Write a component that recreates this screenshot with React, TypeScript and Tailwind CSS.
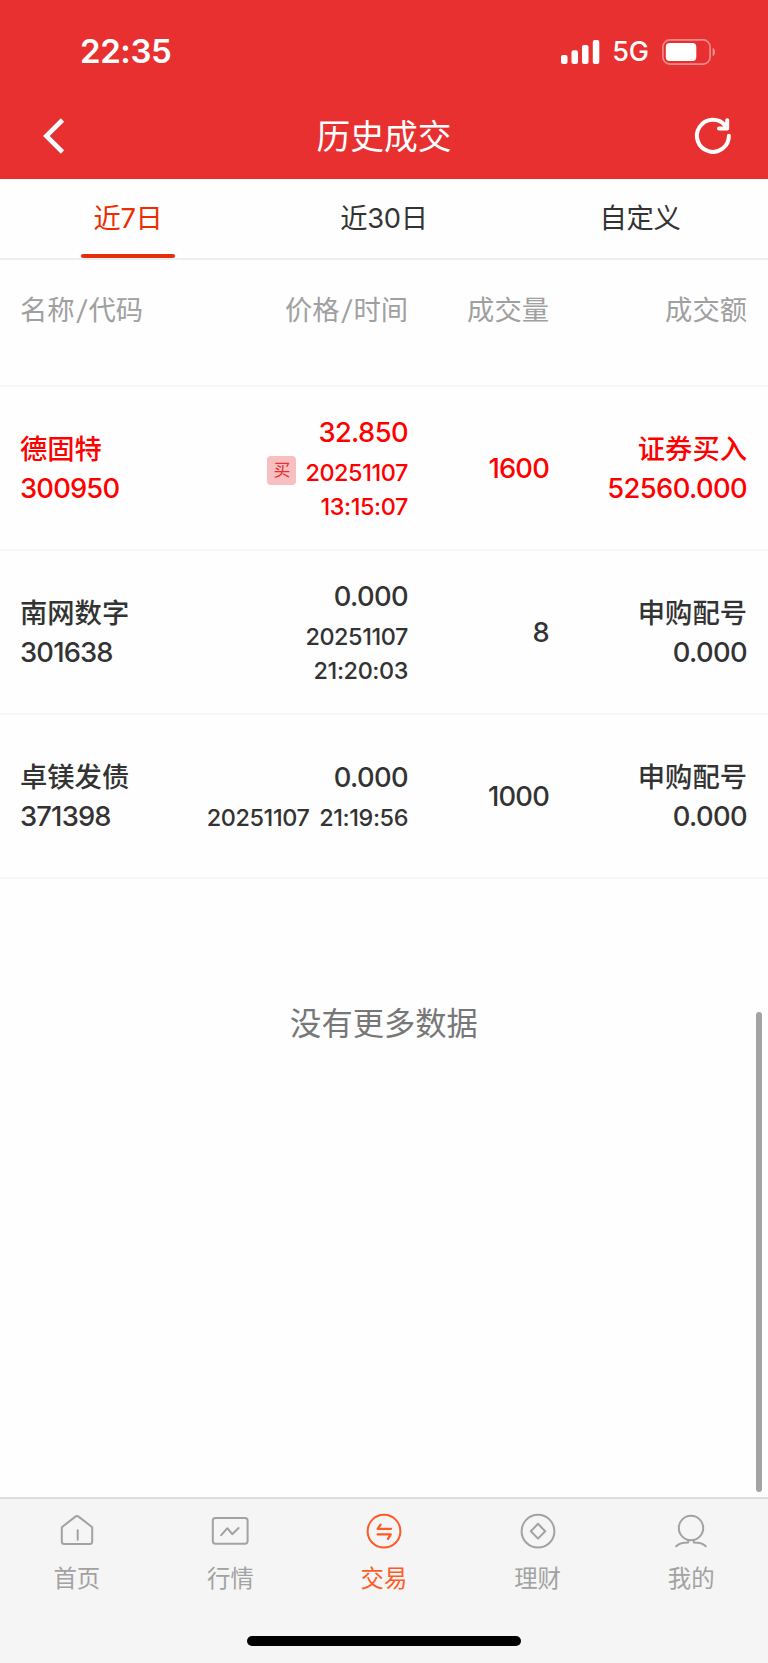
import type { ReactNode } from 'react';
import clsx from 'clsx';

interface Deal {
  name: string;
  code: string;
  price: string;
  time: string[];
  volume: string;
  type: string;
  amount: string;
  buy?: boolean;
}

interface NavItem {
  label: string;
  icon: ReactNode;
  active?: boolean;
}

const tabs = ['近7日', '近30日', '自定义'];

const deals: Deal[] = [
  {
    name: '德固特',
    code: '300950',
    price: '32.850',
    time: ['20251107', '13:15:07'],
    volume: '1600',
    type: '证券买入',
    amount: '52560.000',
    buy: true,
  },
  {
    name: '南网数字',
    code: '301638',
    price: '0.000',
    time: ['20251107', '21:20:03'],
    volume: '8',
    type: '申购配号',
    amount: '0.000',
  },
  {
    name: '卓镁发债',
    code: '371398',
    price: '0.000',
    time: ['20251107 21:19:56'],
    volume: '1000',
    type: '申购配号',
    amount: '0.000',
  },
];

const navItems: NavItem[] = [
  {
    label: '首页',
    icon: (
      <>
        <path d="M4.8 16.2 18.4 5.6q1.6-1.1 3.2 0L35.2 16.2V30.5q0 2.5-2.5 2.5H7.3q-2.5 0-2.5-2.5Z" />
        <path d="M20.7 19.2v9.6" />
      </>
    ),
  },
  {
    label: '行情',
    icon: (
      <>
        <rect x="2.8" y="6.9" width="34.8" height="25.8" rx="2.6" />
        <path d="m11.2 24.2 6.2-7 4.8 6 6.4-6.2" />
      </>
    ),
  },
  {
    label: '交易',
    active: true,
    icon: (
      <>
        <circle cx="20" cy="20.2" r="16.4" />
        <path d="M27 17.8H13.6l3-4.2M13.6 23.4h13.2l-2.8 4.4" strokeWidth="2.2" />
      </>
    ),
  },
  {
    label: '理财',
    icon: (
      <>
        <circle cx="20" cy="20.2" r="16.4" />
        <path d="m20 12.8 7.2 7.4-7.2 7.4-7.2-7.4Z" />
      </>
    ),
  },
  {
    label: '我的',
    icon: (
      <>
        <circle cx="20" cy="17" r="12.2" />
        <path d="M17.2 29v2.6C12 31.6 7.8 32.6 5.2 35.3M22.8 29v2.6c5.2 0 9.4 1 12 3.7" />
      </>
    ),
  },
];

function StatusBar() {
  return (
    <div className="flex h-[103px] items-center justify-between pr-[51px] pl-20 text-white">
      <span className="text-[33px] font-semibold tracking-[-0.4px]">22:35</span>
      <div className="flex items-center">
        <svg className="h-6 w-[39px]" viewBox="0 0 39 24" fill="currentColor">
          <rect x="0" y="15" width="6.5" height="9" rx="2" />
          <rect x="10.5" y="10.3" width="6.5" height="13.7" rx="2" />
          <rect x="21" y="5" width="6.5" height="19" rx="2" />
          <rect x="31.8" y="0" width="6.5" height="24" rx="2" />
        </svg>
        <span className="mt-px ml-3 text-[27px] leading-8 font-medium">5G</span>
        <svg className="ml-[13px] h-[26px] w-[55px]" viewBox="0 0 55 26">
          <rect x="0.9" y="0.9" width="47.2" height="24.2" rx="7" fill="none" stroke="white" strokeOpacity="0.45" strokeWidth="1.6" />
          <rect x="3.8" y="4" width="30.5" height="18" rx="4" fill="white" />
          <path d="M50.7 9v8c3-1 3-7 0-8Z" fill="white" fillOpacity="0.5" />
        </svg>
      </div>
    </div>
  );
}

function TitleBar() {
  return (
    <div className="grid h-[76px] grid-cols-3 items-start px-[42px] pt-3 text-white">
      <svg className="mt-px h-10 w-6" viewBox="0 0 24 40" fill="none" stroke="currentColor" strokeWidth="4.6">
        <path d="M20.5 4 4.3 20l16.2 16" />
      </svg>
      <h1 className="text-center text-[33.8px] leading-[44px] font-normal">历史成交</h1>
      <svg className="-mt-px -mr-[9px] h-11 w-11 justify-self-end" viewBox="0 0 44 44" fill="none" stroke="currentColor" strokeWidth="4" strokeLinecap="round" strokeLinejoin="round">
        <path d="M37.9 21.8A16 16 0 1 1 34.2 11.6" />
        <path d="M36.2 6.3v8.1H28" />
      </svg>
    </div>
  );
}

function DealRow({ deal }: { deal: Deal }) {
  return (
    <div
      className={clsx(
        'flex h-[164px] items-center border-b-2 border-[#f7f7f7] pr-[21px] pl-5 text-[27.3px] leading-[39px] font-medium tracking-[-0.6px]',
        deal.buy ? 'text-[#ff0000]' : 'text-[#333333]'
      )}
    >
      <div className="w-[140px] pt-0.5">
        <div className="tracking-normal">{deal.name}</div>
        <div className="tracking-[-0.8px]">{deal.code}</div>
      </div>
      <div className="flex w-[248px] flex-col items-end pb-1 text-right">
        <div className="leading-[47px]">{deal.price}</div>
        <div className="flex items-center gap-[9px]">
          {deal.buy && (
            <span className="mb-[38px] flex h-[29px] w-[29px] items-center justify-center rounded bg-[#f8bfc0] text-[17px] leading-none font-normal tracking-normal text-[#e93030]">
              买
            </span>
          )}
          <div className="text-[23.4px] leading-[34px] tracking-[-0.4px] [word-spacing:4px] whitespace-pre">
            {deal.time.map((line) => (
              <div key={line}>{line}</div>
            ))}
          </div>
        </div>
      </div>
      <div className="w-[141px] text-right tracking-[-0.8px]">{deal.volume}</div>
      <div className="flex-1 pt-0.5 text-right">
        <div className="tracking-normal">{deal.type}</div>
        <div>{deal.amount}</div>
      </div>
    </div>
  );
}

function BottomNav() {
  return (
    <nav className="h-[166px] border-t-2 border-[#dcdcdc] bg-[#f5f5f5]">
      <div className="grid h-[137px] grid-cols-5">
        {navItems.map(({ label, icon, active }) => (
          <div
            key={label}
            className={clsx('flex flex-col items-center pt-3', active ? 'text-[#ff5a26]' : 'text-[#a2a2a2]')}
          >
            <svg className="h-10 w-10" viewBox="0 0 40 40" fill="none" stroke="currentColor" strokeWidth="2" strokeLinecap="round" strokeLinejoin="round">
              {icon}
            </svg>
            <span className="mt-3 text-[23.4px] leading-8 font-normal">{label}</span>
          </div>
        ))}
      </div>
      <div className="mx-auto h-2.5 w-[274px] rounded-full bg-black" />
    </nav>
  );
}

function Slash() {
  return <span className="inline-block -skew-x-6 px-0.5">/</span>;
}

export default function App() {
  return (
    <div className="flex h-[1663px] w-[768px] flex-col bg-[#fefefe] font-['Inter','Noto_Sans_CJK_SC',sans-serif]">
      <header className="h-[179px] bg-[#e93030]">
        <StatusBar />
        <TitleBar />
      </header>

      <div className="grid h-[81px] grid-cols-3 border-b-2 border-[#eeeeee] text-[27.3px] text-[#333333]">
        {tabs.map((tab, i) => (
          <div key={tab} className={clsx('flex flex-col items-center justify-between pt-5', i === 0 && 'text-[#ee2c00]')}>
            <span className="leading-10 tracking-[-0.3px]">{tab}</span>
            {i === 0 && <span className="h-1 w-[94px] rounded-full bg-[#e62e0a]" />}
          </div>
        ))}
      </div>

      <main className="relative flex-1">
        <div className="flex h-[127px] border-b-2 border-[#f7f7f7] pt-[31px] pr-[21px] pl-5 text-[27.3px] leading-10 text-[#a0a0a0]">
          <div className="w-[140px]">
            名称<Slash />代码
          </div>
          <div className="w-[248px] text-right">
            价格<Slash />时间
          </div>
          <div className="w-[141px] text-right">成交量</div>
          <div className="flex-1 text-right">成交额</div>
        </div>
        {deals.map((deal) => (
          <DealRow key={deal.code} deal={deal} />
        ))}
        <p className="mt-[125px] text-center text-[31.3px] leading-10 text-[#777777]">没有更多数据</p>
        <div className="absolute right-1.5 bottom-[5px] h-[480px] w-1.5 rounded-full bg-[#a3a3a3]" />
      </main>

      <BottomNav />
    </div>
  );
}
